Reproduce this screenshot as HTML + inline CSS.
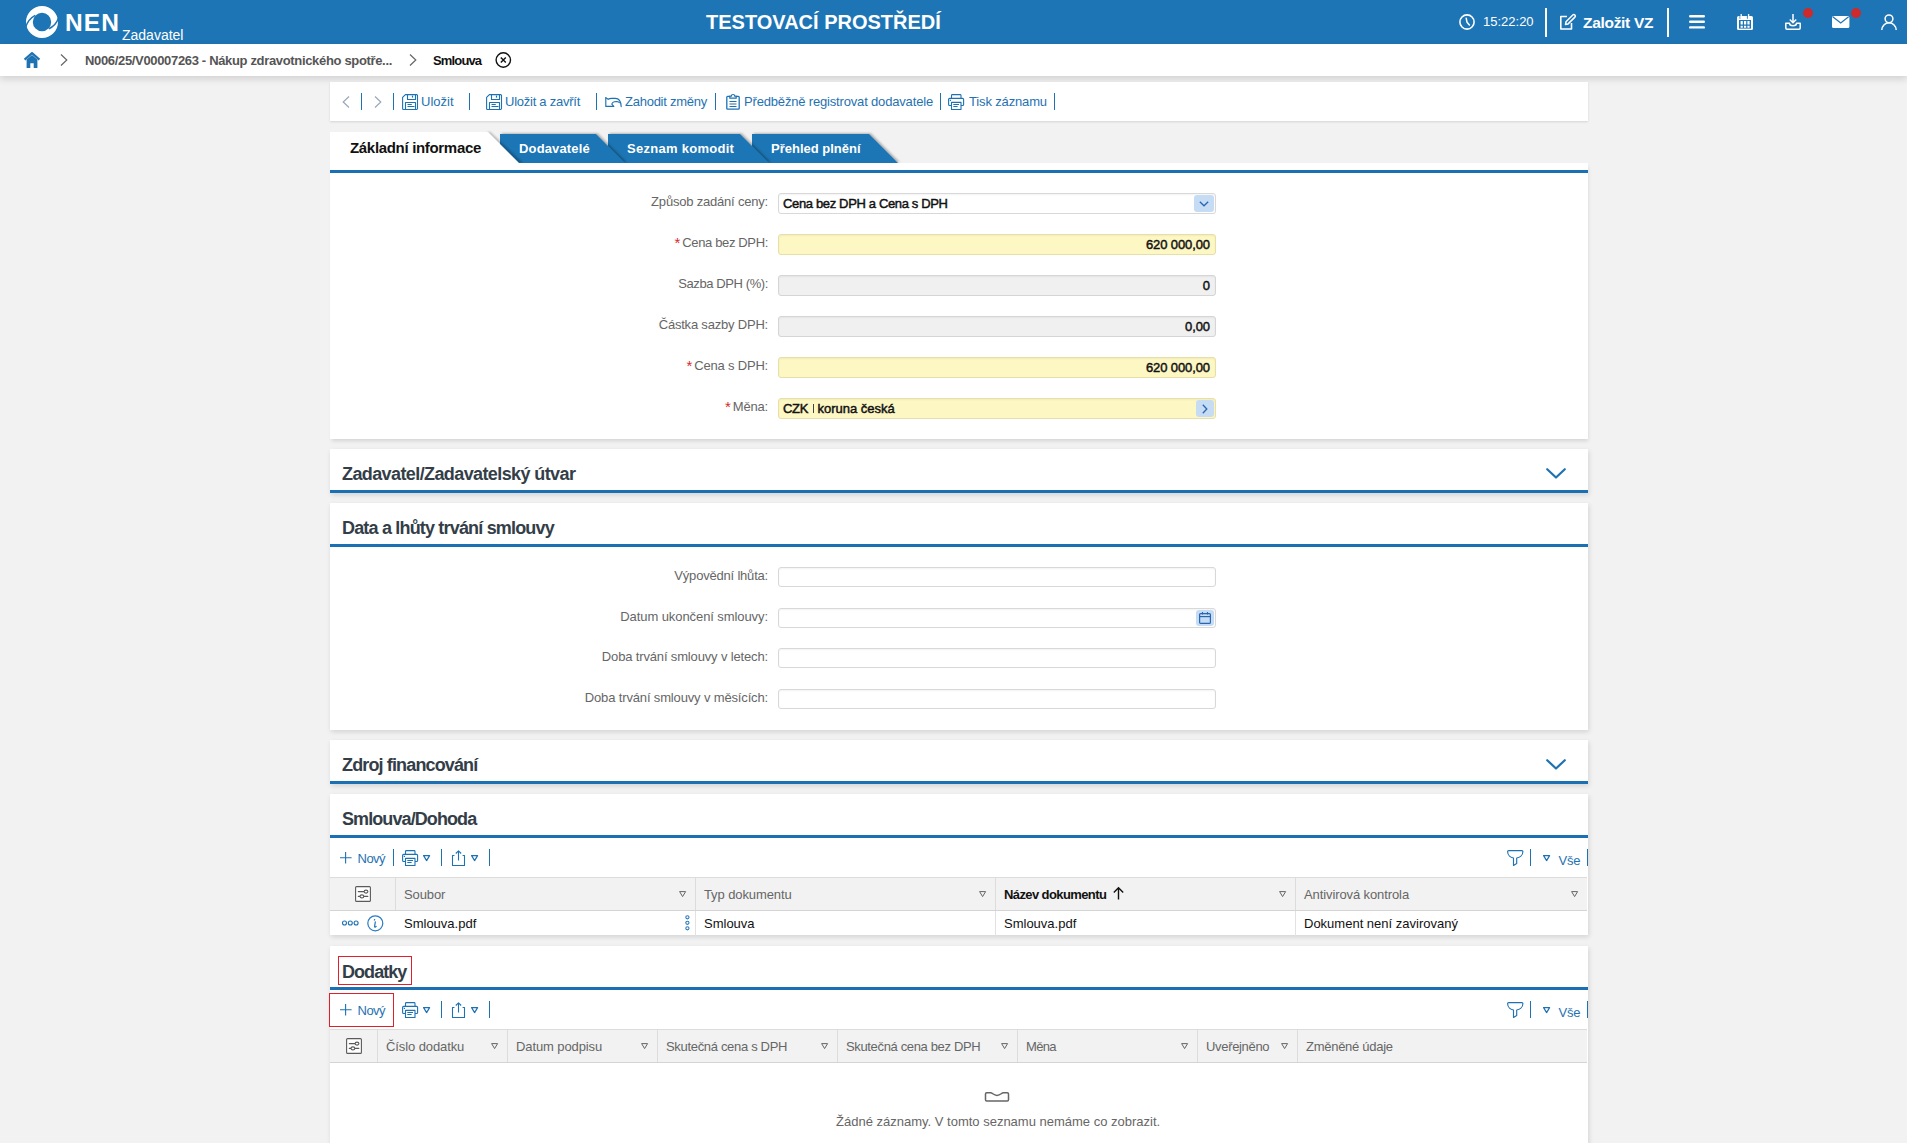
<!DOCTYPE html>
<html lang="cs">
<head>
<meta charset="utf-8">
<style>
*{box-sizing:border-box;margin:0;padding:0}
html,body{width:1907px;height:1143px;overflow:hidden}
body{background:#f2f2f2;font-family:"Liberation Sans",sans-serif;font-size:13px;color:#222;position:relative}
.a{position:absolute;white-space:nowrap}
svg{position:absolute;overflow:visible}
#hdr{position:absolute;left:0;top:0;width:1907px;height:44px;background:#1e75b5}
#bc{position:absolute;left:0;top:44px;width:1907px;height:32px;background:#fff;box-shadow:0 3px 7px rgba(0,0,0,.14)}
.panel{position:absolute;left:330px;width:1258px;background:#fff;box-shadow:1px 2px 5px rgba(0,0,0,.13)}
.blue-b{border-bottom:3px solid #1a70b2}
.h2{position:absolute;left:12px;font-weight:bold;font-size:18px;color:#333e48;letter-spacing:-0.6px;white-space:nowrap;line-height:20px}
.lbl{position:absolute;right:820px;color:#666;font-size:13px;letter-spacing:-0.2px;line-height:16px;white-space:nowrap;text-align:right}
.req{color:#d42a2a;margin-right:2px;font-size:15px;vertical-align:-1px;letter-spacing:0}
.inp{position:absolute;left:448px;width:438px;height:21px;border:1px solid #d8d8d8;border-radius:3px;background:#fff;box-shadow:inset 0 1px 2px rgba(0,0,0,.05)}
.inp.y{background:#fdf7c4;border-color:#e7dfa8}
.inp.g{background:#f0f0f0;border-color:#d5d5d5}
.val{position:absolute;font-weight:normal;-webkit-text-stroke:0.45px #111;color:#111;font-size:13px;line-height:16px;top:2px;white-space:nowrap}
.lnk{color:#1f72b2}
.dv{position:absolute;width:1.2px;background:#1f72b2}
.tb-txt{position:absolute;color:#1f72b2;font-size:13px;line-height:16px;white-space:nowrap}
</style>
</head>
<body>
<!-- HEADER -->
<div id="hdr">
  <svg style="left:26px;top:6px" width="32" height="32" viewBox="0 0 32 32">
    <circle cx="16" cy="16" r="12.6" fill="none" stroke="#fff" stroke-width="6.8"/>
    <path d="M-0.5 21.5 C1.5 15.5 4.5 11.8 9.2 9.4" fill="none" stroke="#1e75b5" stroke-width="1.5"/>
    <path d="M32.6 11.8 C30.8 17 27.5 20.8 22.8 22.8" fill="none" stroke="#1e75b5" stroke-width="1.5"/>
  </svg>
  <div class="a" style="left:65px;top:9px;font-weight:bold;font-size:24.5px;line-height:28px;color:#fff;letter-spacing:1.1px">NEN</div>
  <div class="a" style="left:122px;top:27px;font-size:14px;line-height:17px;color:#fff">Zadavatel</div>
  <div class="a" style="left:706px;top:11px;font-weight:bold;font-size:20px;line-height:23px;color:#fff;letter-spacing:0px">TESTOVACÍ PROSTŘEDÍ</div>

  <!-- clock -->
  <svg style="left:1459px;top:14px" width="16" height="16" viewBox="0 0 16 16"><circle cx="8" cy="8" r="7.1" fill="none" stroke="#fff" stroke-width="1.6"/><path d="M7.2 4.2 L8 8.2 L10.4 11" fill="none" stroke="#fff" stroke-width="1.5" stroke-linecap="round"/></svg>
  <div class="a" style="left:1483px;top:14px;font-size:13px;line-height:16px;color:#fff">15:22:20</div>
  <div style="position:absolute;left:1545px;top:8px;width:2px;height:29px;background:#fff"></div>
  <svg style="left:1559px;top:14px" width="17" height="16" viewBox="0 0 17 16"><path d="M8 2.5 H1.8 V15 H12.5 V9" fill="none" stroke="#fff" stroke-width="1.6" stroke-linejoin="round"/><path d="M6.5 10.5 L7 7.8 L13.8 1 A1.4 1.4 0 0 1 15.9 3.1 L9.1 9.9 Z" fill="none" stroke="#fff" stroke-width="1.5" stroke-linejoin="round"/></svg>
  <div class="a" style="left:1583px;top:13px;font-weight:bold;font-size:15.5px;line-height:19px;color:#fff;letter-spacing:-0.3px">Založit VZ</div>
  <div style="position:absolute;left:1667px;top:8px;width:2px;height:29px;background:#fff"></div>
  <!-- hamburger -->
  <svg style="left:1689px;top:15px" width="16" height="14" viewBox="0 0 16 14"><path d="M1.2 1.2 H14.8 M1.2 6.8 H14.8 M1.2 12.4 H14.8" stroke="#fff" stroke-width="2.4" stroke-linecap="round"/></svg>
  <!-- calendar -->
  <svg style="left:1737px;top:14px" width="16" height="16" viewBox="0 0 16 16"><rect x="0" y="2" width="16" height="14" rx="1.6" fill="#fff"/><rect x="2" y="6" width="12" height="8.6" fill="#1e75b5"/><path d="M3.6 7 h2.2 v3.6 h-2.2z M7 7 h2.2 v3.6 h-2.2z M10.4 7 h2.2 v3.6 h-2.2z M3.6 11.8 h2.2 v2 h-2.2z M7 11.8 h2.2 v2 h-2.2z M10.4 11.8 h2.2 v2 h-2.2z" fill="#fff"/><path d="M3 1.6 V4.8 M10.4 1.6 V4.8" stroke="#1e75b5" stroke-width="0.9"/><path d="M4.2 0 V4.6 M11.6 0 V4.6" stroke="#fff" stroke-width="1.3"/></svg>
  <!-- download -->
  <svg style="left:1785px;top:14px" width="16" height="16" viewBox="0 0 16 16"><path d="M8 0 V8.5 M4.8 5.5 L8 8.7 L11.2 5.5" fill="none" stroke="#fff" stroke-width="1.5"/><path d="M0.8 9.2 V14 A1.2 1.2 0 0 0 2 15.2 H14 A1.2 1.2 0 0 0 15.2 14 V9.2 H11.5 A3.5 2.5 0 0 1 4.5 9.2 Z" fill="none" stroke="#fff" stroke-width="1.5" stroke-linejoin="round"/></svg>
  <div style="position:absolute;left:1803px;top:8px;width:10px;height:10px;border-radius:50%;background:#cc2a2d"></div>
  <!-- mail -->
  <svg style="left:1832px;top:16px" width="18" height="12" viewBox="0 0 18 12"><rect x="0" y="0" width="17.4" height="12" rx="1.6" fill="#fff"/><path d="M0.8 0.8 L8.7 7 L16.6 0.8" fill="none" stroke="#1e75b5" stroke-width="1.2"/></svg>
  <div style="position:absolute;left:1851px;top:8px;width:10px;height:10px;border-radius:50%;background:#cc2a2d"></div>
  <!-- user -->
  <svg style="left:1881px;top:14px" width="16" height="16" viewBox="0 0 16 16"><circle cx="8" cy="4.8" r="3.9" fill="none" stroke="#fff" stroke-width="1.5"/><path d="M0.8 16 A7.2 7.2 0 0 1 15.2 16" fill="none" stroke="#fff" stroke-width="1.5"/></svg>
</div>
<!-- BREADCRUMB -->
<div id="bc">
  <svg style="left:24px;top:8px" width="16" height="16" viewBox="0 0 16 16"><path d="M0.6 7.6 L8 1.2 L15.4 7.6" fill="none" stroke="#1f72b2" stroke-width="2.2" stroke-linejoin="round"/><path d="M2.6 7.5 L8 3 L13.4 7.5 V16 H9.7 V11.3 H6.3 V16 H2.6 Z" fill="#1f72b2"/></svg>
  <svg style="left:60px;top:10px" width="8" height="12" viewBox="0 0 8 12"><path d="M1 0.5 L6.8 6 L1 11.5" fill="none" stroke="#666" stroke-width="1.2"/></svg>
  <div class="a" style="left:85px;top:9px;font-weight:bold;font-size:13px;line-height:16px;color:#555;letter-spacing:-0.335px">N006/25/V00007263 - Nákup zdravotnického spotře...</div>
  <svg style="left:409px;top:10px" width="8" height="12" viewBox="0 0 8 12"><path d="M1 0.5 L6.8 6 L1 11.5" fill="none" stroke="#666" stroke-width="1.2"/></svg>
  <div class="a" style="left:433px;top:8.6px;font-weight:bold;font-size:13px;line-height:16px;color:#111;letter-spacing:-0.85px">Smlouva</div>
  <svg style="left:495px;top:8px" width="17" height="17" viewBox="0 0 17 17"><circle cx="8.3" cy="8" r="7.2" fill="none" stroke="#111" stroke-width="1.4"/><path d="M5.8 5.5 L10.8 10.5 M10.8 5.5 L5.8 10.5" stroke="#111" stroke-width="1.4"/></svg>
</div>

<!-- TOOLBAR -->
<div class="panel" style="top:82px;height:39px;box-shadow:0 1px 2px rgba(0,0,0,.12)">
  <svg style="left:12px;top:14px" width="8" height="12" viewBox="0 0 8 12"><path d="M7 0.5 L1.2 6 L7 11.5" fill="none" stroke="#9aa8b8" stroke-width="1.2"/></svg>
  <div class="dv" style="left:31px;top:11px;height:17px"></div>
  <svg style="left:44px;top:14px" width="8" height="12" viewBox="0 0 8 12"><path d="M1 0.5 L6.8 6 L1 11.5" fill="none" stroke="#9aa8b8" stroke-width="1.2"/></svg>
  <div class="dv" style="left:63px;top:11px;height:17px"></div>
  <svg style="left:72px;top:12px" width="16" height="16" viewBox="0 0 16 16"><g fill="none" stroke="#1f72b2" stroke-width="1.1" stroke-linejoin="round"><path d="M0.6 3.4 L3.4 0.6 H14.6 A0.9 0.9 0 0 1 15.5 1.5 V14.6 A0.9 0.9 0 0 1 14.6 15.5 H1.5 A0.9 0.9 0 0 1 0.6 14.6 Z"/><path d="M5.5 0.6 V5.5 H13.5 V0.6"/><path d="M3.5 15.5 V8.5 H13.5 V15.5"/><path d="M5.5 10.5 H9.8 M5.5 12.5 H12.5"/></g><path d="M10.5 1.6 V3.6" stroke="#1f72b2" stroke-width="1.2"/></svg>
  <div class="tb-txt" style="left:91px;top:12px">Uložit</div>
  <div class="dv" style="left:139px;top:11px;height:17px"></div>
  <svg style="left:156px;top:12px" width="16" height="16" viewBox="0 0 16 16"><g fill="none" stroke="#1f72b2" stroke-width="1.1" stroke-linejoin="round"><path d="M0.6 3.4 L3.4 0.6 H14.6 A0.9 0.9 0 0 1 15.5 1.5 V14.6 A0.9 0.9 0 0 1 14.6 15.5 H1.5 A0.9 0.9 0 0 1 0.6 14.6 Z"/><path d="M5.5 0.6 V5.5 H13.5 V0.6"/><path d="M3.5 15.5 V8.5 H13.5 V15.5"/><path d="M5.5 10.5 H9.8 M5.5 12.5 H12.5"/></g><path d="M10.5 1.6 V3.6" stroke="#1f72b2" stroke-width="1.2"/></svg>
  <div class="tb-txt" style="left:175px;top:12px;letter-spacing:-0.25px">Uložit a zavřít</div>
  <div class="dv" style="left:266px;top:11px;height:17px"></div>
  <svg style="left:275px;top:15px" width="17" height="11" viewBox="0 0 17 11"><g fill="none" stroke="#1f72b2" stroke-width="1.15" stroke-linejoin="round" stroke-linecap="round"><path d="M0.8 0.7 V9.4 H8.8 L6.8 7.2 Q7.6 4.6 11.4 4.5 Q13.2 4.5 14.4 5.6"/><path d="M0.8 0.7 L3.2 2.3 Q4.4 1.3 6.8 1.3 H10.4 C14.2 1.3 16 4.5 16.2 9.6"/></g></svg>
  <div class="tb-txt" style="left:295px;top:12px;letter-spacing:-0.25px">Zahodit změny</div>
  <div class="dv" style="left:385px;top:11px;height:17px"></div>
  <svg style="left:396px;top:12px" width="14" height="16" viewBox="0 0 14 16"><path d="M4 2.4 H1.6 A0.8 0.8 0 0 0 0.8 3.2 V14.4 A0.8 0.8 0 0 0 1.6 15.2 H12.4 A0.8 0.8 0 0 0 13.2 14.4 V3.2 A0.8 0.8 0 0 0 12.4 2.4 H10" fill="none" stroke="#1f72b2" stroke-width="1.3"/><path d="M3.8 4.2 V2.2 H5.3 A1.7 1.7 0 0 1 8.7 2.2 H10.2 V4.2 Z" fill="none" stroke="#1f72b2" stroke-width="1.2" stroke-linejoin="round"/><path d="M3.5 7.5 H10.5 M3.5 10 H10.5 M3.5 12.5 H10.5" stroke="#1f72b2" stroke-width="1.1"/></svg>
  <div class="tb-txt" style="left:414px;top:12px;letter-spacing:-0.17px">Předběžně registrovat dodavatele</div>
  <div class="dv" style="left:610px;top:11px;height:17px"></div>
  <svg style="left:618px;top:12px" width="16" height="16" viewBox="0 0 16 16"><g fill="none" stroke="#1f72b2" stroke-width="1.1" stroke-linejoin="round"><path d="M3.5 4.3 V1.4 A0.8 0.8 0 0 1 4.3 0.6 H12.2 A0.8 0.8 0 0 1 13 1.4 V4.3"/><path d="M3.3 11.5 H1.6 A1 1 0 0 1 0.6 10.5 V5.4 A1 1 0 0 1 1.6 4.4 H14.6 A1 1 0 0 1 15.6 5.4 V10.5 A1 1 0 0 1 14.6 11.5 H13"/><path d="M3.5 8.4 H13 V15.5 H3.5 Z"/><path d="M5.3 10.5 H11 M5.3 12.5 H9.6 M1.8 6.4 H3"/></g></svg>
  <div class="tb-txt" style="left:639px;top:12px;letter-spacing:-0.15px">Tisk záznamu</div>
  <div class="dv" style="left:724px;top:11px;height:17px"></div>
</div>
<!-- TABS -->
<svg style="left:330px;top:126px" width="600" height="38" viewBox="0 0 600 38">
  <defs>
    <filter id="ds" x="-10%" y="-30%" width="120%" height="160%"><feDropShadow dx="1.6" dy="-0.6" stdDeviation="1.3" flood-color="#000" flood-opacity="0.32"/></filter>
    <filter id="bl" x="-50%" y="-10%" width="200%" height="120%"><feGaussianBlur stdDeviation="1"/></filter>
    <clipPath id="cp"><rect x="0" y="0" width="600" height="37"/></clipPath>
  </defs>
  <g clip-path="url(#cp)">
  <path d="M422 8 H539 L568 37 H422 Z" fill="#1f74b4" filter="url(#ds)"/>
  <path d="M278 8 H410 L439 37 H278 Z" fill="#1f74b4" filter="url(#ds)"/>
  <path d="M170 8 H266 L295 37 H170 Z" fill="#1f74b4" filter="url(#ds)"/>
  <path d="M157 6 L188 37 H193 L160 6 Z" fill="#000" fill-opacity="0.28" filter="url(#bl)"/><path d="M0 6 H158 L189 37 H0 Z" fill="#fff"/>
  </g>
</svg>
<div class="a" style="left:350px;top:139px;font-weight:bold;font-size:15px;line-height:18px;color:#111;letter-spacing:-0.32px">Základní informace</div>
<div class="a" style="left:519px;top:141px;font-weight:bold;font-size:13px;line-height:16px;color:#fff;letter-spacing:0.15px">Dodavatelé</div>
<div class="a" style="left:627px;top:141px;font-weight:bold;font-size:13px;line-height:16px;color:#fff;letter-spacing:0.28px">Seznam komodit</div>
<div class="a" style="left:771px;top:141px;font-weight:bold;font-size:13px;line-height:16px;color:#fff;letter-spacing:0px">Přehled plnění</div>
<!-- FORM PANEL -->
<div class="panel" style="top:163px;height:276px;box-shadow:1px 3px 4px -1px rgba(0,0,0,.13)">
  <div style="position:absolute;left:0;top:7px;width:1258px;height:3px;background:#1a70b2"></div>
  <div class="lbl" style="top:31px">Způsob zadání ceny:</div>
<div class="inp " style="top:30px"><div class="val" style="left:4px;letter-spacing:-0.35px">Cena bez DPH a Cena s DPH</div><div style="position:absolute;right:1px;top:1px;width:20px;height:17px;border-radius:3px;background:#c6dcf4"></div><svg style="right:6px;top:7px" width="10" height="6" viewBox="0 0 10 6"><path d="M0.8 0.8 L5 4.8 L9.2 0.8" fill="none" stroke="#2a66b0" stroke-width="1.3"/></svg></div>
<div class="lbl" style="top:72px;letter-spacing:-0.35px"><span class="req">*</span>Cena bez DPH:</div>
<div class="inp y" style="top:71px"><div class="val" style="right:5px;letter-spacing:-0.1px">620 000,00</div></div>
<div class="lbl" style="top:113px;letter-spacing:-0.4px">Sazba DPH (%):</div>
<div class="inp g" style="top:112px"><div class="val" style="right:5px;letter-spacing:-0.1px">0</div></div>
<div class="lbl" style="top:154px">Částka sazby DPH:</div>
<div class="inp g" style="top:153px"><div class="val" style="right:5px;letter-spacing:-0.1px">0,00</div></div>
<div class="lbl" style="top:195px"><span class="req">*</span>Cena s DPH:</div>
<div class="inp y" style="top:194px"><div class="val" style="right:5px;letter-spacing:-0.1px">620 000,00</div></div>
<div class="lbl" style="top:236px"><span class="req">*</span>Měna:</div>
<div class="inp y" style="top:235px"><div class="val" style="left:4px;letter-spacing:-0.3px">CZK</div><div style="position:absolute;left:33.5px;top:5px;width:1.2px;height:9px;background:#444"></div><div class="val" style="left:38.5px;letter-spacing:0px">koruna česká</div><div style="position:absolute;right:1px;top:1px;width:18px;height:17px;border-radius:3px;background:#c6dcf4"></div><svg style="right:7px;top:5px" width="6" height="10" viewBox="0 0 6 10"><path d="M0.8 0.8 L4.8 5 L0.8 9.2" fill="none" stroke="#2a66b0" stroke-width="1.3"/></svg></div>

</div>

<!-- ZADAVATEL -->
<div class="panel blue-b" style="top:449px;height:44px">
  <div class="h2" style="top:15px">Zadavatel/Zadavatelský útvar</div>
  <svg style="left:1216px;top:18.5px" width="20" height="11" viewBox="0 0 20 11"><path d="M1.2 1.2 L10 9.5 L18.8 1.2" fill="none" stroke="#1f72b2" stroke-width="2.2" stroke-linecap="round" stroke-linejoin="round"/></svg>
</div>
<!-- DATA -->
<div class="panel" style="top:503px;height:227px">
  <div class="h2" style="top:15px;letter-spacing:-0.82px">Data a lhůty trvání smlouvy</div>
  <div style="position:absolute;left:0;top:41px;width:1258px;height:3px;background:#1a70b2"></div>
  <div class="lbl" style="top:65px">Výpovědní lhůta:</div>
<div class="inp" style="top:64px;height:20px"></div>
<div class="lbl" style="top:106px;letter-spacing:-0.08px">Datum ukončení smlouvy:</div>
<div class="inp" style="top:105px;height:20px"><div style="position:absolute;right:1px;top:1px;width:18px;height:16px;border-radius:3px;background:#c6dcf4"></div><svg style="right:3px;top:2px" width="14" height="14" viewBox="0 0 14 14"><rect x="1.6" y="2.6" width="10.8" height="9.8" rx="1" fill="none" stroke="#2a66b0" stroke-width="1.2"/><path d="M1.6 5.6 H12.4" stroke="#2a66b0" stroke-width="1.2"/><path d="M4.5 1 V3.5 M9.5 1 V3.5" stroke="#2a66b0" stroke-width="1.1"/></svg></div>
<div class="lbl" style="top:146px;letter-spacing:-0.15px">Doba trvání smlouvy v letech:</div>
<div class="inp" style="top:145px;height:20px"></div>
<div class="lbl" style="top:187px;letter-spacing:-0.15px">Doba trvání smlouvy v měsících:</div>
<div class="inp" style="top:186px;height:20px"></div>

</div>
<!-- ZDROJ -->
<div class="panel blue-b" style="top:740px;height:44px">
  <div class="h2" style="top:15px;letter-spacing:-0.86px">Zdroj financování</div>
  <svg style="left:1216px;top:18.5px" width="20" height="11" viewBox="0 0 20 11"><path d="M1.2 1.2 L10 9.5 L18.8 1.2" fill="none" stroke="#1f72b2" stroke-width="2.2" stroke-linecap="round" stroke-linejoin="round"/></svg>
</div>

<style>
.tbl{position:absolute;left:0;width:1257px}
.thead{position:absolute;left:0;width:1257px;height:34px;background:#f2f2f2;border-top:1px solid #dcdcdc;border-bottom:1px solid #d4d4d4}
.th{position:absolute;top:0;height:32px;border-left:1px solid #dcdcdc}
.tht{position:absolute;left:8px;top:9px;font-size:13px;line-height:16px;white-space:nowrap}
.td{position:absolute;top:0;height:25px;border-left:1px solid #e2e2e2}
.tdt{position:absolute;left:8px;top:5px;font-size:13px;line-height:16px;color:#111;white-space:nowrap}
</style>
<!-- SMLOUVA/DOHODA -->
<div class="panel" style="top:794px;height:141px">
  <div class="h2" style="top:15px;letter-spacing:-0.91px">Smlouva/Dohoda</div>
  <div style="position:absolute;left:0;top:41px;width:1258px;height:3px;background:#1a70b2"></div>
  
  <svg style="left:10px;top:58px" width="12" height="12" viewBox="0 0 12 12"><path d="M5.6 0 V11.6 M0 5.8 H11.6" stroke="#1f72b2" stroke-width="1.1"/></svg>
  <div class="tb-txt" style="left:27.5px;top:57px;letter-spacing:-0.5px">Nový</div>
  <div class="dv" style="left:63px;top:55px;height:17px"></div>
  <svg style="left:72px;top:56px" width="16" height="16" viewBox="0 0 16 16"><g fill="none" stroke="#1f72b2" stroke-width="1.1" stroke-linejoin="round"><path d="M3.5 4.3 V1.4 A0.8 0.8 0 0 1 4.3 0.6 H12.2 A0.8 0.8 0 0 1 13 1.4 V4.3"/><path d="M3.3 11.5 H1.6 A1 1 0 0 1 0.6 10.5 V5.4 A1 1 0 0 1 1.6 4.4 H14.6 A1 1 0 0 1 15.6 5.4 V10.5 A1 1 0 0 1 14.6 11.5 H13"/><path d="M3.5 8.4 H13 V15.5 H3.5 Z"/><path d="M5.3 10.5 H11 M5.3 12.5 H9.6 M1.8 6.4 H3"/></g></svg>
  <svg style="left:93px;top:61px" width="8" height="7" viewBox="0 0 8 7"><path d="M0.6 0.6 H6.6 L3.6 5.6 Z" fill="none" stroke="#1f72b2" stroke-width="1.2" stroke-linejoin="round"/></svg>
  <div class="dv" style="left:111px;top:55px;height:17px"></div>
  <svg style="left:121px;top:56px" width="14" height="16" viewBox="0 0 14 16"><g fill="none" stroke="#1f72b2" stroke-width="1.1" stroke-linejoin="round"><path d="M3.4 5.5 H1.5 V15.5 H13.5 V5.5 H11.6"/><path d="M7.5 10.5 V0.8 M4.8 3.5 L7.5 0.8 L10.2 3.5"/></g></svg>
  <svg style="left:141px;top:61px" width="8" height="7" viewBox="0 0 8 7"><path d="M0.6 0.6 H6.6 L3.6 5.6 Z" fill="none" stroke="#1f72b2" stroke-width="1.2" stroke-linejoin="round"/></svg>
  <div class="dv" style="left:159px;top:55px;height:17px"></div>
  <svg style="left:1177px;top:56px" width="16" height="16" viewBox="0 0 16 16"><path d="M0.6 1.6 A1 1 0 0 1 1.6 0.6 H14.9 A1 1 0 0 1 15.9 1.6 C15.9 5.5 12.5 7.6 9.7 8 V13.6 L6.5 15.4 V8 C3.8 7.6 0.6 5.5 0.6 1.6 Z" fill="none" stroke="#1f72b2" stroke-width="1.15" stroke-linejoin="round"/></svg>
  <div class="dv" style="left:1200px;top:55px;height:17px"></div>
  <svg style="left:1213px;top:61px" width="8" height="7" viewBox="0 0 8 7"><path d="M0.6 0.6 H6.6 L3.6 5.6 Z" fill="none" stroke="#1f72b2" stroke-width="1.2" stroke-linejoin="round"/></svg>
  <div class="tb-txt" style="left:1228.5px;top:59px;letter-spacing:-0.2px">Vše</div>
  <div class="dv" style="left:1257px;top:55px;height:17px"></div>

  <div class="thead" style="top:83px">
    <div style="position:absolute;left:25px;top:8px"><svg style="left:0px;top:0px" width="16" height="16" viewBox="0 0 16 16"><rect x="0.6" y="0.6" width="14.8" height="14.8" rx="1" fill="#fff" stroke="#5a5a5a" stroke-width="1.1"/><g stroke="#5a5a5a" stroke-width="1.1" stroke-linecap="round"><path d="M3.3 5.6 H9 M3.3 10.4 H5 M8.8 10.4 H12.8"/><ellipse cx="11" cy="5.6" rx="1.9" ry="1.5" fill="#fff"/><ellipse cx="6.9" cy="10.4" rx="1.9" ry="1.5" fill="#fff"/></g></svg></div>
    <div class="th" style="left:65px;width:300px"><div class="tht" style="color:#666;letter-spacing:-0.1px">Soubor</div><svg style="left:283px;top:13px" width="8" height="7" viewBox="0 0 8 7"><path d="M0.6 0.6 H6.6 L3.6 5.6 Z" fill="none" stroke="#666" stroke-width="1.0" stroke-linejoin="round"/></svg></div><div class="th" style="left:365px;width:300px"><div class="tht" style="color:#666;letter-spacing:-0.1px">Typ dokumentu</div><svg style="left:283px;top:13px" width="8" height="7" viewBox="0 0 8 7"><path d="M0.6 0.6 H6.6 L3.6 5.6 Z" fill="none" stroke="#666" stroke-width="1.0" stroke-linejoin="round"/></svg></div><div class="th" style="left:665px;width:300px"><div class="tht" style="font-weight:bold;color:#111;letter-spacing:-0.6px">Název dokumentu<svg style="position:relative;left:0;top:0;display:inline-block;margin-left:7px;vertical-align:-1px" width="11" height="13" viewBox="0 0 11 13"><path d="M5.5 12.5 V1 M0.8 5.5 L5.5 0.8 L10.2 5.5" fill="none" stroke="#111" stroke-width="1.4"/></svg></div><svg style="left:283px;top:13px" width="8" height="7" viewBox="0 0 8 7"><path d="M0.6 0.6 H6.6 L3.6 5.6 Z" fill="none" stroke="#666" stroke-width="1.0" stroke-linejoin="round"/></svg></div><div class="th" style="left:965px;width:292px"><div class="tht" style="color:#666;letter-spacing:-0.1px">Antivirová kontrola</div><svg style="left:275px;top:13px" width="8" height="7" viewBox="0 0 8 7"><path d="M0.6 0.6 H6.6 L3.6 5.6 Z" fill="none" stroke="#666" stroke-width="1.0" stroke-linejoin="round"/></svg></div>
  </div>
  <div style="position:absolute;left:0;top:117px;width:1257px;height:24px">
    <svg style="left:12px;top:9px" width="17" height="6" viewBox="0 0 17 6"><circle cx="2.5" cy="3" r="2" fill="none" stroke="#1f72b2" stroke-width="1.1"/><circle cx="8.3" cy="3" r="2" fill="none" stroke="#1f72b2" stroke-width="1.1"/><circle cx="14.1" cy="3" r="2" fill="none" stroke="#1f72b2" stroke-width="1.1"/></svg>
    <svg style="left:37px;top:4px" width="17" height="17" viewBox="0 0 17 17"><circle cx="8.3" cy="8.3" r="7.5" fill="none" stroke="#2a7bc0" stroke-width="1.2"/><path d="M7.4 5 L7.6 4.6 M8.3 7 C8 9.5 7.4 11.5 7.6 12 C7.8 12.3 8.6 12 9.2 11.4" fill="none" stroke="#2a7bc0" stroke-width="1.3" stroke-linecap="round"/></svg>
    <div class="tdt" style="left:74px">Smlouva.pdf</div>
    <svg style="left:355px;top:4px" width="5" height="16" viewBox="0 0 5 16"><circle cx="2.4" cy="2.3" r="1.6" fill="none" stroke="#2a7bc0" stroke-width="1.1"/><circle cx="2.4" cy="7.8" r="1.6" fill="none" stroke="#2a7bc0" stroke-width="1.1"/><circle cx="2.4" cy="13.3" r="1.6" fill="none" stroke="#2a7bc0" stroke-width="1.1"/></svg>
    <div class="td" style="left:365px;width:300px"><div class="tdt">Smlouva</div></div>
    <div class="td" style="left:665px;width:300px"><div class="tdt">Smlouva.pdf</div></div>
    <div class="td" style="left:965px;width:292px"><div class="tdt">Dokument není zavirovaný</div></div>
  </div>
</div>
<!-- DODATKY -->
<div class="panel" style="top:946px;height:200px">
  <div class="h2" style="top:16px;letter-spacing:-0.95px">Dodatky</div>
  <div style="position:absolute;left:8px;top:10px;width:74px;height:29px;border:1px solid #e0202a"></div>
  <div style="position:absolute;left:0;top:41px;width:1258px;height:3px;background:#1a70b2"></div>
  
  <svg style="left:10px;top:58px" width="12" height="12" viewBox="0 0 12 12"><path d="M5.6 0 V11.6 M0 5.8 H11.6" stroke="#1f72b2" stroke-width="1.1"/></svg>
  <div class="tb-txt" style="left:27.5px;top:57px;letter-spacing:-0.5px">Nový</div>
  
  <svg style="left:72px;top:56px" width="16" height="16" viewBox="0 0 16 16"><g fill="none" stroke="#1f72b2" stroke-width="1.1" stroke-linejoin="round"><path d="M3.5 4.3 V1.4 A0.8 0.8 0 0 1 4.3 0.6 H12.2 A0.8 0.8 0 0 1 13 1.4 V4.3"/><path d="M3.3 11.5 H1.6 A1 1 0 0 1 0.6 10.5 V5.4 A1 1 0 0 1 1.6 4.4 H14.6 A1 1 0 0 1 15.6 5.4 V10.5 A1 1 0 0 1 14.6 11.5 H13"/><path d="M3.5 8.4 H13 V15.5 H3.5 Z"/><path d="M5.3 10.5 H11 M5.3 12.5 H9.6 M1.8 6.4 H3"/></g></svg>
  <svg style="left:93px;top:61px" width="8" height="7" viewBox="0 0 8 7"><path d="M0.6 0.6 H6.6 L3.6 5.6 Z" fill="none" stroke="#1f72b2" stroke-width="1.2" stroke-linejoin="round"/></svg>
  <div class="dv" style="left:111px;top:55px;height:17px"></div>
  <svg style="left:121px;top:56px" width="14" height="16" viewBox="0 0 14 16"><g fill="none" stroke="#1f72b2" stroke-width="1.1" stroke-linejoin="round"><path d="M3.4 5.5 H1.5 V15.5 H13.5 V5.5 H11.6"/><path d="M7.5 10.5 V0.8 M4.8 3.5 L7.5 0.8 L10.2 3.5"/></g></svg>
  <svg style="left:141px;top:61px" width="8" height="7" viewBox="0 0 8 7"><path d="M0.6 0.6 H6.6 L3.6 5.6 Z" fill="none" stroke="#1f72b2" stroke-width="1.2" stroke-linejoin="round"/></svg>
  <div class="dv" style="left:159px;top:55px;height:17px"></div>
  <svg style="left:1177px;top:56px" width="16" height="16" viewBox="0 0 16 16"><path d="M0.6 1.6 A1 1 0 0 1 1.6 0.6 H14.9 A1 1 0 0 1 15.9 1.6 C15.9 5.5 12.5 7.6 9.7 8 V13.6 L6.5 15.4 V8 C3.8 7.6 0.6 5.5 0.6 1.6 Z" fill="none" stroke="#1f72b2" stroke-width="1.15" stroke-linejoin="round"/></svg>
  <div class="dv" style="left:1200px;top:55px;height:17px"></div>
  <svg style="left:1213px;top:61px" width="8" height="7" viewBox="0 0 8 7"><path d="M0.6 0.6 H6.6 L3.6 5.6 Z" fill="none" stroke="#1f72b2" stroke-width="1.2" stroke-linejoin="round"/></svg>
  <div class="tb-txt" style="left:1228.5px;top:59px;letter-spacing:-0.2px">Vše</div>
  <div class="dv" style="left:1257px;top:55px;height:17px"></div>

  <div style="position:absolute;left:-1px;top:47px;width:65px;height:34px;border:1px solid #e0202a"></div>
  <div class="thead" style="top:83px">
    <div style="position:absolute;left:16px;top:8px"><svg style="left:0px;top:0px" width="16" height="16" viewBox="0 0 16 16"><rect x="0.6" y="0.6" width="14.8" height="14.8" rx="1" fill="#fff" stroke="#5a5a5a" stroke-width="1.1"/><g stroke="#5a5a5a" stroke-width="1.1" stroke-linecap="round"><path d="M3.3 5.6 H9 M3.3 10.4 H5 M8.8 10.4 H12.8"/><ellipse cx="11" cy="5.6" rx="1.9" ry="1.5" fill="#fff"/><ellipse cx="6.9" cy="10.4" rx="1.9" ry="1.5" fill="#fff"/></g></svg></div>
    <div class="th" style="left:47px;width:130px"><div class="tht" style="color:#666;letter-spacing:-0.1px">Číslo dodatku</div><svg style="left:113px;top:13px" width="8" height="7" viewBox="0 0 8 7"><path d="M0.6 0.6 H6.6 L3.6 5.6 Z" fill="none" stroke="#666" stroke-width="1.0" stroke-linejoin="round"/></svg></div><div class="th" style="left:177px;width:150px"><div class="tht" style="color:#666;letter-spacing:-0.1px">Datum podpisu</div><svg style="left:133px;top:13px" width="8" height="7" viewBox="0 0 8 7"><path d="M0.6 0.6 H6.6 L3.6 5.6 Z" fill="none" stroke="#666" stroke-width="1.0" stroke-linejoin="round"/></svg></div><div class="th" style="left:327px;width:180px"><div class="tht" style="color:#666;letter-spacing:-0.32px">Skutečná cena s DPH</div><svg style="left:163px;top:13px" width="8" height="7" viewBox="0 0 8 7"><path d="M0.6 0.6 H6.6 L3.6 5.6 Z" fill="none" stroke="#666" stroke-width="1.0" stroke-linejoin="round"/></svg></div><div class="th" style="left:507px;width:180px"><div class="tht" style="color:#666;letter-spacing:-0.35px">Skutečná cena bez DPH</div><svg style="left:163px;top:13px" width="8" height="7" viewBox="0 0 8 7"><path d="M0.6 0.6 H6.6 L3.6 5.6 Z" fill="none" stroke="#666" stroke-width="1.0" stroke-linejoin="round"/></svg></div><div class="th" style="left:687px;width:180px"><div class="tht" style="color:#666;letter-spacing:-0.67px">Měna</div><svg style="left:163px;top:13px" width="8" height="7" viewBox="0 0 8 7"><path d="M0.6 0.6 H6.6 L3.6 5.6 Z" fill="none" stroke="#666" stroke-width="1.0" stroke-linejoin="round"/></svg></div><div class="th" style="left:867px;width:100px"><div class="tht" style="color:#666;letter-spacing:-0.33px">Uveřejněno</div><svg style="left:83px;top:13px" width="8" height="7" viewBox="0 0 8 7"><path d="M0.6 0.6 H6.6 L3.6 5.6 Z" fill="none" stroke="#666" stroke-width="1.0" stroke-linejoin="round"/></svg></div><div class="th" style="left:967px;width:290px"><div class="tht" style="color:#666;letter-spacing:-0.27px">Změněné údaje</div></div>
  </div>
  <svg style="left:654px;top:146px" width="26" height="10" viewBox="0 0 26 10"><path d="M1.5 2 A1.2 1.2 0 0 1 2.7 0.8 H6.8 C8.5 0.8 9.5 3.4 13 3.4 C16.5 3.4 17.5 0.8 19.2 0.8 H23.3 A1.2 1.2 0 0 1 24.5 2 V7.8 A1.2 1.2 0 0 1 23.3 9 H2.7 A1.2 1.2 0 0 1 1.5 7.8 Z" fill="none" stroke="#666" stroke-width="1.5" stroke-linejoin="round"/></svg>
  <div class="a" style="left:506px;top:168px;font-size:13px;line-height:16px;color:#666">Žádné záznamy. V tomto seznamu nemáme co zobrazit.</div>
</div>
</body>
</html>
